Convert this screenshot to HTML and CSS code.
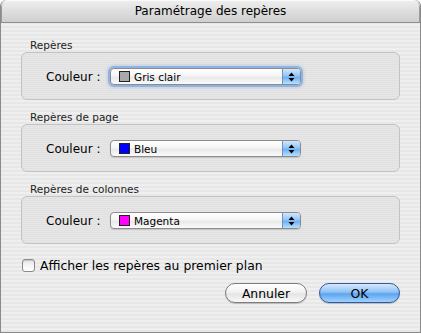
FILE: index.html
```html
<!DOCTYPE html>
<html lang="fr">
<head>
  <meta charset="UTF-8">
  <title>Paramétrage des repères</title>
  <link rel="stylesheet" href="styles.css">
</head>
<body>
  <div class="window">
    <div class="titlebar">Paramétrage des repères</div>

    <div class="content">
      <div class="group">
        <div class="group-label">Repères</div>
        <div class="group-box">
          <span class="field-label">Couleur :</span>
          <div class="popup focused">
            <span class="swatch swatch-gray"></span>
            <span class="popup-text">Gris clair</span>
            <span class="popup-arrows">
              <svg width="7" height="10" viewBox="0 0 7 10"><path d="M3.5 0.5 L6.5 4 L0.5 4 Z M0.5 6 L6.5 6 L3.5 9.5 Z" fill="#000"/></svg>
            </span>
          </div>
        </div>
      </div>

      <div class="group">
        <div class="group-label">Repères de page</div>
        <div class="group-box">
          <span class="field-label">Couleur :</span>
          <div class="popup">
            <span class="swatch swatch-blue"></span>
            <span class="popup-text">Bleu</span>
            <span class="popup-arrows">
              <svg width="7" height="10" viewBox="0 0 7 10"><path d="M3.5 0.5 L6.5 4 L0.5 4 Z M0.5 6 L6.5 6 L3.5 9.5 Z" fill="#000"/></svg>
            </span>
          </div>
        </div>
      </div>

      <div class="group">
        <div class="group-label">Repères de colonnes</div>
        <div class="group-box">
          <span class="field-label">Couleur :</span>
          <div class="popup">
            <span class="swatch swatch-magenta"></span>
            <span class="popup-text">Magenta</span>
            <span class="popup-arrows">
              <svg width="7" height="10" viewBox="0 0 7 10"><path d="M3.5 0.5 L6.5 4 L0.5 4 Z M0.5 6 L6.5 6 L3.5 9.5 Z" fill="#000"/></svg>
            </span>
          </div>
        </div>
      </div>

      <label class="check-row">
        <span class="checkbox"></span>
        <span>Afficher les repères au premier plan</span>
      </label>

      <div class="buttons">
        <button class="btn">Annuler</button>
        <button class="btn btn-default">OK</button>
      </div>
    </div>
  </div>
</body>
</html>
```

FILE: styles.css
```css
/* Global */
body {
  margin: 0;
  padding: 0;
  background: #ffffff;
  font-family: 'DejaVu Sans', 'Liberation Sans', sans-serif;
  color: #000;
}

/* Window frame */
.window {
  width: 421px;
  height: 333px;
  box-sizing: border-box;
  border: 1px solid #8a8a8a;
  border-top: none;
  border-radius: 6px 6px 0 0;
  background: repeating-linear-gradient(to bottom, #efefef 0, #efefef 2px, #e7e7e7 2px, #e7e7e7 4px);
  overflow: hidden;
}

.titlebar {
  height: 22px;
  line-height: 22px;
  text-align: center;
  font-size: 12px;
  background: linear-gradient(to bottom, #efefef 0%, #dedede 50%, #cfcfcf 100%);
  border-bottom: 1px solid #8e8e8e;
  border-radius: 6px 6px 0 0;
  box-shadow: inset 0 1px 0 #fafafa, inset 1px 0 0 #9a9a9a, inset -1px 0 0 #9a9a9a;
}

.content {
  padding: 15px 20px 0 20px;
}

/* Group boxes */
.group {
  margin-bottom: 10px;
}

.group-label {
  height: 14px;
  line-height: 14px;
  font-size: 10.5px;
  padding-left: 9px;
  color: #222;
}

.group-box {
  height: 48px;
  box-sizing: border-box;
  border: 1px solid #c2c2c2;
  border-radius: 6px;
  background: repeating-linear-gradient(to bottom, #e6e6e6 0, #e6e6e6 1px, #e1e1e1 1px, #e1e1e1 2px);
  display: flex;
  align-items: center;
  padding-left: 24px;
  padding-top: 1px;
}

.field-label {
  font-size: 12px;
  width: 64px;
}

/* Pop-up menus */
.popup {
  width: 191px;
  height: 17px;
  box-sizing: border-box;
  border: 1px solid #8c8c8c;
  border-radius: 4px;
  background: linear-gradient(to bottom, #ffffff 0%, #f6f6f6 45%, #e9e9e9 55%, #fafafa 100%);
  display: flex;
  align-items: center;
  padding-left: 8px;
  box-shadow: 0 1px 1px rgba(0, 0, 0, 0.15);
  overflow: hidden;
}

.popup.focused {
  box-shadow: 0 0 0 2px rgba(126, 170, 226, 0.75), 0 0 3px 3px rgba(126, 170, 226, 0.35);
}

.swatch {
  width: 11px;
  height: 11px;
  box-sizing: border-box;
  border: 1px solid #222;
  margin-right: 4px;
}

.swatch-gray { background: #a9a9a9; }
.swatch-blue { background: #0000ff; }
.swatch-magenta { background: #ff00ff; }

.popup-text {
  font-size: 10.5px;
  flex: 1;
}

.popup-arrows {
  width: 17px;
  height: 100%;
  border-left: 1px solid #6f93c4;
  background: linear-gradient(to bottom, #cfe6fc 0%, #94c6f6 45%, #6eb0f2 55%, #b7e0ff 100%);
  display: flex;
  align-items: center;
  justify-content: center;
}

.popup-arrows svg {
  display: block;
}

/* Checkbox */
.check-row {
  display: flex;
  align-items: center;
  height: 16px;
  margin-top: 13px;
  font-size: 12.4px;
  gap: 5px;
  padding-left: 1px;
}

.checkbox {
  width: 13px;
  height: 13px;
  box-sizing: border-box;
  border: 1px solid #8a8a8a;
  border-radius: 3px;
  background: linear-gradient(to bottom, #e6e6e6 0%, #f8f8f8 60%, #ffffff 100%);
  box-shadow: inset 0 1px 1px rgba(0, 0, 0, 0.15);
}

/* Buttons */
.buttons {
  display: flex;
  justify-content: flex-end;
  gap: 12px;
  margin-top: 10px;
}

.btn {
  width: 82px;
  height: 20px;
  box-sizing: border-box;
  border: 1px solid #7c7c7c;
  border-radius: 10px;
  font-family: inherit;
  font-size: 12.4px;
  color: #000;
  padding: 0;
  background: linear-gradient(to bottom, #ffffff 0%, #f2f2f2 45%, #e4e4e4 55%, #f8f8f8 100%);
  box-shadow: 0 1px 1px rgba(0, 0, 0, 0.2);
}

.btn-default {
  width: 81px;
  border-color: #34589a;
  background: linear-gradient(to bottom, #d5e8fd 0%, #8fc2f5 45%, #5ea4ee 55%, #9ed3ff 100%);
}
```
